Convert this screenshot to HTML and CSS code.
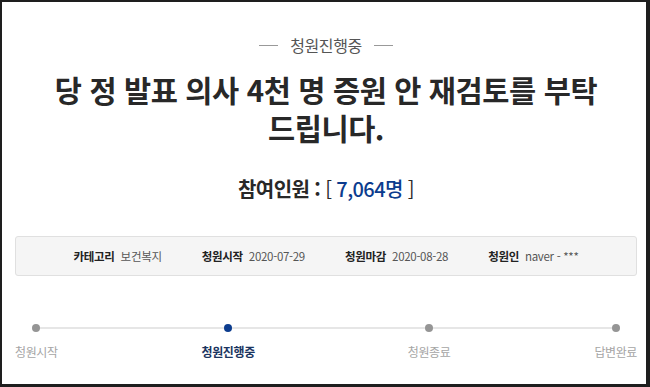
FILE: index.html
```html
<!DOCTYPE html>
<html lang="ko">
<head>
<meta charset="utf-8">
<link rel="stylesheet" href="styles.css">
</head>
<body>
<div class="frame">
  <div class="status"><span class="dash"></span><span class="status-text">청원진행중</span><span class="dash"></span></div>
  <h1 class="title">당 정 발표 의사 4천 명 증원 안 재검토를 부탁<br>드립니다.</h1>
  <div class="count"><span class="count-label">참여인원 :</span> <span class="bracket">[</span> <span class="count-num">7,064명</span> <span class="bracket">]</span></div>
  <div class="info">
    <div class="info-item"><span class="info-label">카테고리</span><span class="info-value">보건복지</span></div>
    <div class="info-item"><span class="info-label">청원시작</span><span class="info-value">2020-07-29</span></div>
    <div class="info-item"><span class="info-label">청원마감</span><span class="info-value">2020-08-28</span></div>
    <div class="info-item"><span class="info-label">청원인</span><span class="info-value">naver - ***</span></div>
  </div>
  <div class="progress">
    <div class="step"><span class="dot"></span><span class="step-label">청원시작</span></div>
    <div class="step active"><span class="dot"></span><span class="step-label">청원진행중</span></div>
    <div class="step"><span class="dot"></span><span class="step-label">청원종료</span></div>
    <div class="step"><span class="dot"></span><span class="step-label">답변완료</span></div>
  </div>
</div>
</body>
</html>
```
FILE: styles.css
```css
html, body {
  margin: 0;
  padding: 0;
  background: #1e1e1e;
}
body {
  font-family: "Noto Sans CJK KR", "Noto Sans", sans-serif;
  color: #333;
}
.frame {
  width: 650px;
  height: 387px;
  box-sizing: border-box;
  border-style: solid;
  border-color: #1e1e1e;
  border-width: 2px 4px 3px 2px;
  background: #fff;
  padding: 33px 9px 0 13px;
  display: flex;
  flex-direction: column;
}
.status {
  display: flex;
  justify-content: center;
  align-items: center;
  gap: 12px;
  height: 20px;
}
.dash {
  width: 19px;
  height: 1px;
  background: #999;
  margin-top: 1px;
}
.status-text {
  font-size: 16px;
  line-height: 20px;
  color: #555;
  letter-spacing: -0.4px;
}
.title {
  margin: 15px 0 0;
  font-size: 29.5px;
  line-height: 38px;
  font-weight: 700;
  text-align: center;
  letter-spacing: -0.4px;
  color: #282828;
}
.count {
  margin-top: 29px;
  text-align: center;
  font-size: 20px;
  line-height: 28px;
  letter-spacing: -0.6px;
  color: #282828;
}
.count-label {
  font-weight: 700;
}
.bracket {
  font-weight: 400;
}
.count-num {
  font-weight: 500;
  color: #0c3c8e;
}
.info {
  margin-top: 33px;
  height: 40px;
  box-sizing: border-box;
  border: 1px solid #e0e0e0;
  border-radius: 3px;
  background: #f5f5f5;
  display: flex;
  justify-content: center;
  align-items: center;
  gap: 40px;
  font-size: 11.5px;
  letter-spacing: -0.3px;
}
.info-item {
  display: flex;
  align-items: center;
  gap: 6px;
}
.info-label {
  font-weight: 700;
  color: #222;
}
.info-value {
  color: #555;
}
.progress {
  position: relative;
  margin-top: 48px;
  display: flex;
  justify-content: space-between;
}
.progress::before {
  content: "";
  position: absolute;
  left: 20px;
  right: 20px;
  top: 3px;
  height: 2px;
  background: #e6e6e6;
}
.step {
  position: relative;
  display: flex;
  flex-direction: column;
  align-items: center;
  gap: 12px;
}
.dot {
  width: 8px;
  height: 8px;
  border-radius: 50%;
  background: #959595;
}
.step-label {
  font-size: 12px;
  line-height: 16px;
  color: #a5a5a5;
  letter-spacing: -0.4px;
}
.step.active {
  margin-right: 9px;
}
.step.active .dot {
  background: #0c3c8e;
}
.step.active .step-label {
  color: #1b355f;
  font-weight: 700;
}
```
